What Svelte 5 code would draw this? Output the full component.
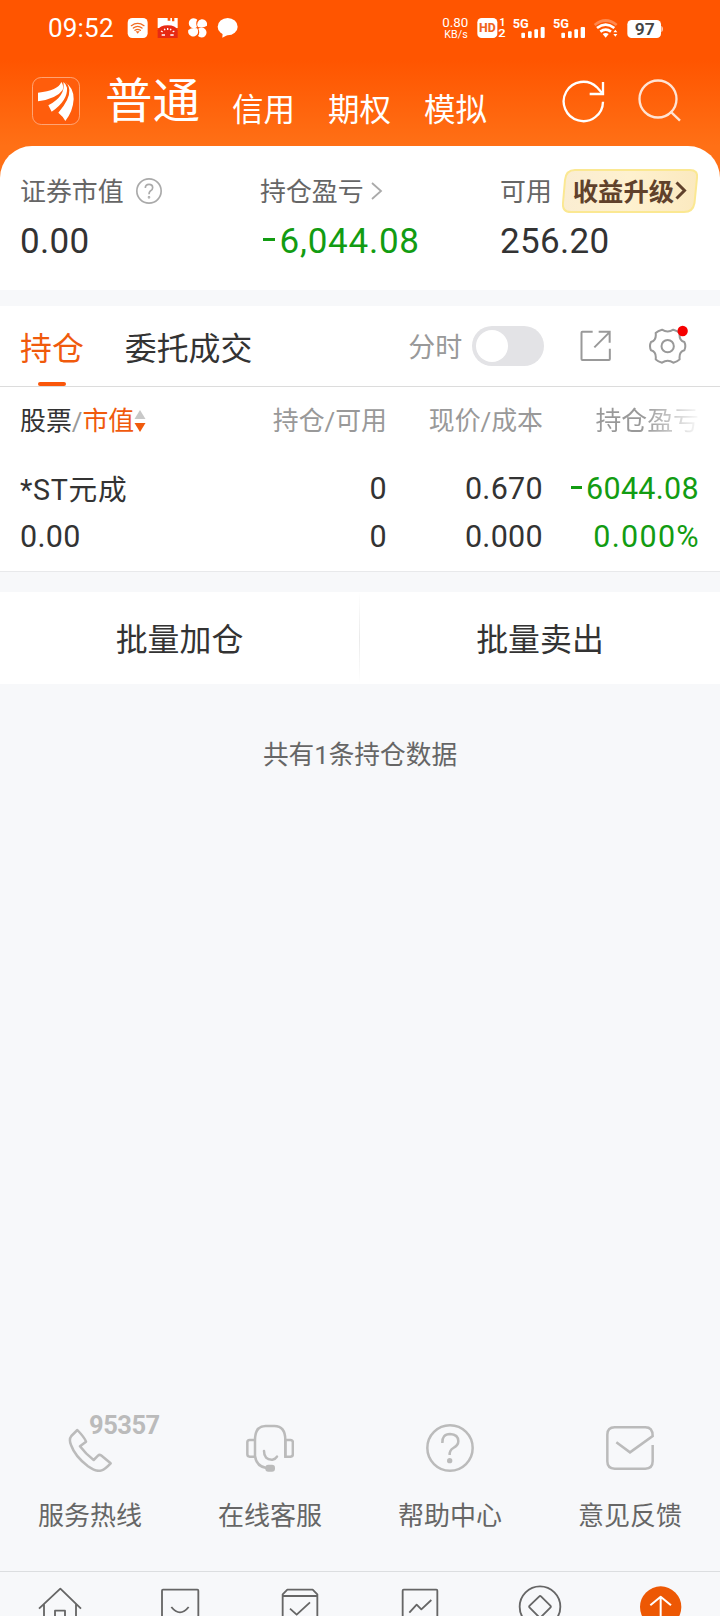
<script>
  const accounts = ['信用', '期权', '模拟'];
  const rows = [
    { name: '*ST元成', value: '0.00', hold: '0', usable: '0', price: '0.670', cost: '0.000', profit: '-6044.08', rate: '0.000%' }
  ];
  let intraday = $state(false);
</script>

<div class="screen">
  <header>
    <div class="status">
      <span class="clock">09:52</span>
      <svg class="apps" width="112" height="24" viewBox="382 48 336 72">
        <rect x="384" y="54" width="60" height="60" rx="14" fill="#fff" />
        <g fill="none" stroke="#f26a20" stroke-width="4" stroke-linecap="round">
          <path d="M395 77 Q414 63 433 77M401 84 Q414 74 427 84M406 91 Q414 85 422 91" />
        </g>
        <path d="M408 94 h12 l-6 7z" fill="#f26a20" />
        <path d="M474 54 h30 v8 h8 v-8 h5 v10 h7 v-10 h10 v30 h-60z" fill="#fff" />
        <path d="M474 91 Q480 76 504 76 Q528 76 534 91 V114 H474z" fill="#e72a13" />
        <path d="M484 93l5 3M494 86l2 5M504 84v6M514 86l-2 5M524 93l-5 3M486 105h10M512 105h10" stroke="#fff" stroke-width="4" />
        <g fill="#fff">
          <path d="M592 81 A15 15 0 1 1 593 59 Q587 67 592 81" />
          <path d="M595 81 A15 15 0 1 1 622 77 Q611 85 595 81" />
          <path d="M596 86 A15 15 0 1 1 595 108 Q602 98 596 86" />
          <path d="M592 85 A15 15 0 1 1 566 90 Q577 81 592 85" />
          <ellipse cx="684" cy="80" rx="30" ry="26" />
          <path d="M669 98 L668 113 L688 103z" />
        </g>
      </svg>
      <svg class="signals" width="221" height="24" viewBox="248 48 663 72">
        <g fill="#fff" font-family="Roboto, sans-serif">
          <text x="249" y="82" font-size="36" textLength="78" lengthAdjust="spacingAndGlyphs">0.80</text>
          <text x="255" y="113" font-size="32" textLength="70" lengthAdjust="spacingAndGlyphs">KB/s</text>
          <rect x="354" y="54" width="60" height="60" rx="13" />
          <text x="359" y="97" font-size="36" font-weight="800" fill="#f0651d" textLength="50" lengthAdjust="spacingAndGlyphs">HD</text>
          <text x="420" y="79" font-size="33" font-weight="600">1</text>
          <text x="417" y="112" font-size="34" font-weight="600" textLength="22" lengthAdjust="spacingAndGlyphs">2</text>
          <text x="460" y="83" font-size="40" font-weight="700" textLength="48" lengthAdjust="spacingAndGlyphs">5G</text>
          <text x="581" y="83" font-size="40" font-weight="700" textLength="48" lengthAdjust="spacingAndGlyphs">5G</text>
          <rect x="486" y="98" width="11" height="16" rx="3" /><rect x="506" y="94" width="11" height="20" rx="3" /><rect x="525" y="88" width="11" height="26" rx="3" /><rect x="544" y="81" width="12" height="33" rx="3" />
          <rect x="606" y="98" width="11" height="16" rx="3" /><rect x="626" y="94" width="11" height="20" rx="3" /><rect x="645" y="88" width="11" height="26" rx="3" /><rect x="664" y="81" width="13" height="33" rx="3" />
          <g fill="none" stroke="#fff" stroke-width="8">
            <path d="M706 75 Q739 48 772 75" opacity=".3" />
            <path d="M713 84 Q739 64 765 84M723 95 Q739 83 755 95" />
          </g>
          <path d="M730 102 Q739 96 748 102 L739 113z" />
          <path d="M762 97 l6-8 6 8zM762 102 l6 8 6-8z" />
          <rect x="804" y="60" width="101" height="54" rx="13" />
          <path d="M906 77 q5 2 5 10 t-5 10z" opacity=".7" />
          <text x="826" y="105" font-size="47" font-weight="600" fill="#444" textLength="60" lengthAdjust="spacingAndGlyphs">97</text>
        </g>
      </svg>
    </div>
    <div class="titlebar">
      <svg class="logo" width="48" height="48" viewBox="96 231 144 144">
        <rect x="97.500" y="232.500" width="141" height="141" rx="26" fill="#ff5d0c" stroke="#ffa474" stroke-width="3" />
        <g fill="#fff">
          <path d="M184 246 Q174 272 114 278 V304 Q170 296 188 270 Q192 257 184 246" />
          <path d="M190 246 Q198 288 145 316 L155 335 Q204 301 201 263 Q199 252 190 246" />
          <path d="M195 247 Q206 252 208 270 Q210 298 175 338 Q188 348 196 363 Q219 334 221 298 Q221 262 195 247" />
        </g>
      </svg>
      <h1>普通</h1>
      <nav class="accounts">
        {#each accounts as a}<span>{a}</span>{/each}
      </nav>
      <svg class="tools" width="120" height="46" viewBox="606 234 360 138" fill="none">
        <path d="M729 305 A59 59 0 1 1 711 262 L728 281" stroke="#fff" stroke-width="7" />
        <path d="M729 246 V282 H689" stroke="#fff" stroke-width="7" />
        <g stroke="#ffe3d3" stroke-width="7"><circle cx="894" cy="297" r="55.500" /><path d="M931 334 L960 362" /></g>
      </svg>
    </div>
  </header>

  <section class="summary">
    <div class="stat">
      <div class="label"><span>证券市值</span>
        <svg class="hint" width="26" height="26" viewBox="408 114 78 78" fill="none" stroke="#aaa" stroke-width="5">
          <circle cx="447" cy="153" r="36.500" /><path d="M436 144 Q436 133 447 133 Q458 133 458 143 Q458 149 451 153 Q447 156 447 163" /><circle cx="447" cy="172" r="1.500" />
        </svg>
      </div>
      <div class="num">0.00</div>
    </div>
    <div class="stat">
      <div class="label"><span>持仓盈亏</span>
        <svg class="more" width="12" height="18" viewBox="0 0 12 18" fill="none" stroke="#aaa" stroke-width="1.800"><path d="M1 1 L10 9 L1 17" /></svg>
      </div>
      <div class="num green loss"><i class="minus"></i>6,044.08</div>
    </div>
    <div class="stat">
      <div class="label"><span>可用</span>
        <div class="upgrade">
          <svg class="plate" width="136" height="44" viewBox="0 0 136 44">
            <defs><linearGradient id="gold" x1="0" y1="0" x2="1" y2="0"><stop offset="0" stop-color="#faedd2" /><stop offset=".5" stop-color="#fef1cf" /><stop offset="1" stop-color="#fbe9bf" /></linearGradient></defs>
            <path d="M13 1 H128 Q136 1 135 9 L132.500 34 Q131 43 122 43 H9 Q0 43 1 34 L3 11 Q4 1 13 1" fill="url(#gold)" stroke="#fbe892" stroke-width="2" />
          </svg>
          <b>收益升级</b>
          <svg class="go" width="12" height="20" viewBox="0 0 12 20" fill="none" stroke="#60412b" stroke-width="3"><path d="M1.500 1.500 L9.500 9.500 L1.500 17.500" /></svg>
        </div>
      </div>
      <div class="num">256.20</div>
    </div>
  </section>

  <section class="holdings">
    <div class="tabs">
      <span class="tab active">持仓</span>
      <span class="tab">委托成交</span>
      <span class="switch-label">分时</span>
      <button class="switch" class:on={intraday} aria-label="分时" onclick={() => (intraday = !intraday)}><i></i></button>
      <svg class="export" width="32" height="32" viewBox="661 91 96 96" fill="none" stroke="#999" stroke-width="6">
        <path d="M699 96 H668 Q665.500 96 665.500 99 V178 Q665.500 181 668 181 H748 Q750.500 181 750.500 178 V147M717 96 H750 V129M749 98 L704 143" />
      </svg>
      <svg class="gear" width="40" height="40" viewBox="868 75 120 120" fill="none">
        <path d="M907 89 Q924 100 941 89 Q953 92 960 99 Q957 121 974 126 Q980 138 974 151 Q957 156 960 178 Q953 185 941 188 Q924 176 907 188 Q895 185 888 178 Q891 156 874 151 Q868 138 874 126 Q891 121 888 99 Q895 92 907 89z" stroke="#999" stroke-width="6" stroke-linejoin="round" />
        <circle cx="924" cy="138.500" r="18.500" stroke="#999" stroke-width="6" />
        <circle cx="969" cy="93" r="15.500" fill="#f60000" />
      </svg>
    </div>
    <div class="grid head">
      <span class="dark">股票<em>/</em><strong>市值</strong><svg width="12" height="24" viewBox="0 0 12 24"><path d="M6 1 L11.500 10 H.5z" fill="#c8c8c8" /><path d="M.5 14 H11.500 L6 23z" fill="#f05a0c" /></svg></span>
      <span>持仓/可用</span>
      <span>现价/成本</span>
      <span class="fade">持仓盈亏</span>
    </div>
    {#each rows as r}
      <div class="grid body">
        <span class="name">{r.name}</span><span>{r.hold}</span><span>{r.price}</span><span class="green profit"><i class="minus"></i>{r.profit.slice(1)}</span>
        <span>{r.value}</span><span>{r.usable}</span><span>{r.cost}</span><span class="green rate">{r.rate}</span>
      </div>
    {/each}
  </section>

  <div class="batch"><button>批量加仓</button><i></i><button>批量卖出</button></div>
  <p class="count">共有1条持仓数据</p>

  <section class="services">
    <div class="service">
      <svg width="48" height="48" viewBox="198 72 144 144" fill="none" stroke="#bbb" stroke-width="7.500" stroke-linejoin="round">
        <path d="M232 90 L214 108 Q206 118 213 135 Q225 169 264 199 Q289 217 305 211 Q315 208 332 190 L303 166 Q298 163 294 167 L281 180 Q257 162 240 139 L258 125 Q255 114 232 90z" />
      </svg>
      <b class="hotline">95357</b>
      <span>服务热线</span>
    </div>
    <div class="service">
      <svg width="48" height="48" viewBox="738 72 144 144" fill="none" stroke="#bbb" stroke-width="7.500">
        <path d="M763 120 H749 Q742 120 742 127 V163 Q742 170 749 170 H764M856 120 H871 Q878.500 120 878.500 127 V163 Q878.500 170 871 170 H856z" />
        <path d="M765 170 V120 Q765 78 797 78 H823 Q856 78 856 120 V170M765 168 Q769 199 799 204" />
        <path d="M792 153 Q792 180 817 179 Q827 177 831 170" stroke-linecap="round" />
        <rect x="796" y="194" width="29" height="21" rx="9" fill="#bbb" stroke="none" />
      </svg>
      <span>在线客服</span>
    </div>
    <div class="service">
      <svg width="48" height="48" viewBox="198 72 144 144" fill="none" stroke="#bbb" stroke-width="7.500">
        <circle cx="270" cy="144" r="68" />
        <path d="M247 129 Q246 102 270 102 Q295 103 295 124 Q295 136 280 144 Q268 151 269 165" />
        <circle cx="269" cy="182" r="8" fill="#bbb" stroke="none" />
      </svg>
      <span>帮助中心</span>
    </div>
    <div class="service">
      <svg width="48" height="48" viewBox="738 72 144 144" fill="none" stroke="#bbb" stroke-width="7.500">
        <path d="M769 127 L810 157 L878 108 Q878 82 856 82 H764 Q742 82 742 104 V184 Q742 206 764 206 H856 Q878 206 878 184 V135" />
      </svg>
      <span>意见反馈</span>
    </div>
  </section>

  <nav class="bottom">
    <svg viewBox="114 556 132 132"><path d="M117 627 L181 567 L243 627M132 614 V690M228 614 V690M165 690 V633 H195 V690" /></svg>
    <svg viewBox="474 556 132 132"><path d="M486 690 V573 Q486 570 489 570 H592 Q595 570 595 573 V690M514 622 Q540 654 566 622" /></svg>
    <svg viewBox="834 556 132 132"><path d="M848 690 V584 L862 570 H938 L952 584 V690M848 589 H952M870 627 L890 645 L930 608" /></svg>
    <svg viewBox="114 556 132 132"><path d="M128 690 V573 Q128 570 131 570 H229 Q232 570 232 573 V690M148 639 L170 615 L184 629 L214 601" /></svg>
    <svg viewBox="474 556 132 132"><circle cx="540" cy="621" r="61" /><path d="M538 590 Q540 587 543 590 L571 618 Q574 621 571 624 L543 652 Q540 655 537 652 L509 624 Q506 621 509 618z" /></svg>
    <svg viewBox="834 556 132 132"><circle cx="902" cy="622" r="62" fill="#ed5804" stroke="none" /><path d="M871 617 L902 591 L933 617M902 591 V680" stroke="#fff" stroke-width="6" /></svg>
  </nav>
</div>

<style>
  :global(body) { margin: 0; overflow: hidden; }
  .screen {
    width: 720px; height: 1616px; overflow: hidden; box-sizing: border-box;
    display: flex; flex-direction: column; background: #f7f8fa; color: #333;
    font-family: Roboto, "Noto Sans CJK SC", sans-serif;
  }
  svg { display: block; flex: none; }
  header { height: 190px; flex: none; background: linear-gradient(#ff5500 0 60px, #ff7016 146px); color: #fff; }
  .status { height: 56px; padding: 0 57px 0 48px; display: flex; align-items: center; }
  .clock { font-size: 26px; width: 79px; line-height: 57px; letter-spacing: .2px; }
  .signals { margin-left: auto; }
  .titlebar { display: flex; height: 90px; padding-left: 32px; }
  .logo { margin-top: 21px; }
  h1 { margin: 0 0 0 25px; font-size: 47.5px; line-height: 93px; font-weight: 400; width: 127px; flex: none; }
  .accounts { display: flex; gap: 33px; font-size: 31.5px; line-height: 109px; white-space: nowrap; }
  .tools { margin: 22px 0 0 75px; }
  .summary {
    height: 144px; flex: none; margin-top: -44px; background: #fff; border-radius: 32px 32px 0 0;
    display: grid; grid-template-columns: repeat(3, 240px);
  }
  .stat { padding: 23px 0 0 20px; }
  .label { display: flex; align-items: center; height: 44px; font-size: 25.900px; color: #666; white-space: nowrap; }
  .label > span { margin-top: -3px; }
  .hint { margin-left: 12px; }
  .more { margin-left: 7px; }
  .upgrade { position: relative; display: flex; align-items: center; width: 136px; height: 44px; margin-left: 10px; color: #60412b; font-size: 25.300px; }
  .plate { position: absolute; inset: 0; }
  .upgrade b { position: relative; margin: -3px 0 0 11px; width: 102px; }
  .go { position: relative; }
  .num { font-size: 35px; line-height: 57px; letter-spacing: .3px; }
  .loss { letter-spacing: .75px; }
  .green { color: #129c12; }
  .minus { display: inline-block; width: .35em; height: 2.800px; background: currentColor; vertical-align: .34em; margin: 0 .13em 0 .08em; }
  .holdings { height: 265px; flex: none; margin-top: 16px; background: #fff; border-bottom: 1px solid #e8e9eb; }
  .tabs { display: flex; align-items: center; height: 80px; border-bottom: 1px solid #dcdcdc; padding-left: 20px; }
  .tab { position: relative; font-size: 31.900px; line-height: 80px; height: 80px; padding-top: 3px; box-sizing: border-box; margin-right: 41px; }
  .active { color: #f05a0c; }
  .active::after { content: ''; position: absolute; left: 18px; bottom: 0; width: 28px; height: 4px; border-radius: 2px; background: #fa560a; }
  .switch-label { margin: -2px 0 0 115px; font-size: 27px; color: #999; }
  .switch { margin-left: 10px; width: 72px; height: 40px; padding: 4px; border: 0; border-radius: 20px; background: #e3e3e6; }
  .switch i { display: block; width: 32px; height: 32px; border-radius: 50%; background: #fff; }
  .switch.on i { margin-left: 32px; }
  .export { margin-left: 36px; }
  .gear { margin-left: 37px; margin-top: -2px; }
  .grid { display: grid; grid-template-columns: 201px 166px 156px 156px; padding-left: 20px; text-align: right; white-space: nowrap; }
  .head { font-size: 25.900px; line-height: 68px; height: 66px; color: #999; }
  .head .dark { display: flex; align-items: center; color: #333; }
  em { font-style: normal; color: #999; }
  .head strong { font-weight: 400; color: #f05a0c; }
  .fade { background: linear-gradient(90deg, #999 65%, #fff 102%); background-clip: text; color: transparent; }
  .body { margin-top: 12px; font-size: 30.500px; line-height: 48px; letter-spacing: .3px; }
  .body span:nth-child(4n + 1) { text-align: left; }
  .body .name { font-size: 28.700px; letter-spacing: .7px; line-height: 50px; height: 48px; }
  .body .profit { letter-spacing: .3px; }
  .body .rate { letter-spacing: 1.3px; margin-right: -1px; }
  .batch { display: flex; height: 92px; flex: none; margin-top: 20px; background: #fff; }
  .batch button { width: 359px; border: 0; padding: 5px 0 0; height: 92px; background: none; font: 31.900px/87px Roboto, "Noto Sans CJK SC", sans-serif; color: #333; }
  .batch button:last-child { width: 360px; }
  .batch i { width: 1px; background: linear-gradient(#fff, #eaeaea 50%, #fff); }
  .count { margin: 51px 0 0; text-align: center; font-size: 25.700px; line-height: 40px; color: #666; }
  .services { display: grid; grid-template-columns: repeat(4, 180px); margin-top: auto; height: 147px; flex: none; }
  .service { position: relative; display: flex; flex-direction: column; align-items: center; font-size: 26px; line-height: 40px; color: #666; }
  .service span { margin-top: 24px; }
  .hotline { position: absolute; left: 89px; top: -12px; font-size: 25.500px; line-height: 26px; letter-spacing: -.5px; color: #bbb; }
  .bottom { height: 45px; flex: none; display: flex; justify-content: space-between; box-sizing: border-box; padding: 13px 38px 0; border-top: 1px solid #dcdee0; overflow: hidden; }
  .bottom svg { width: 44px; height: 44px; fill: none; stroke: #666; stroke-width: 5.5; stroke-linejoin: round; }
</style>
